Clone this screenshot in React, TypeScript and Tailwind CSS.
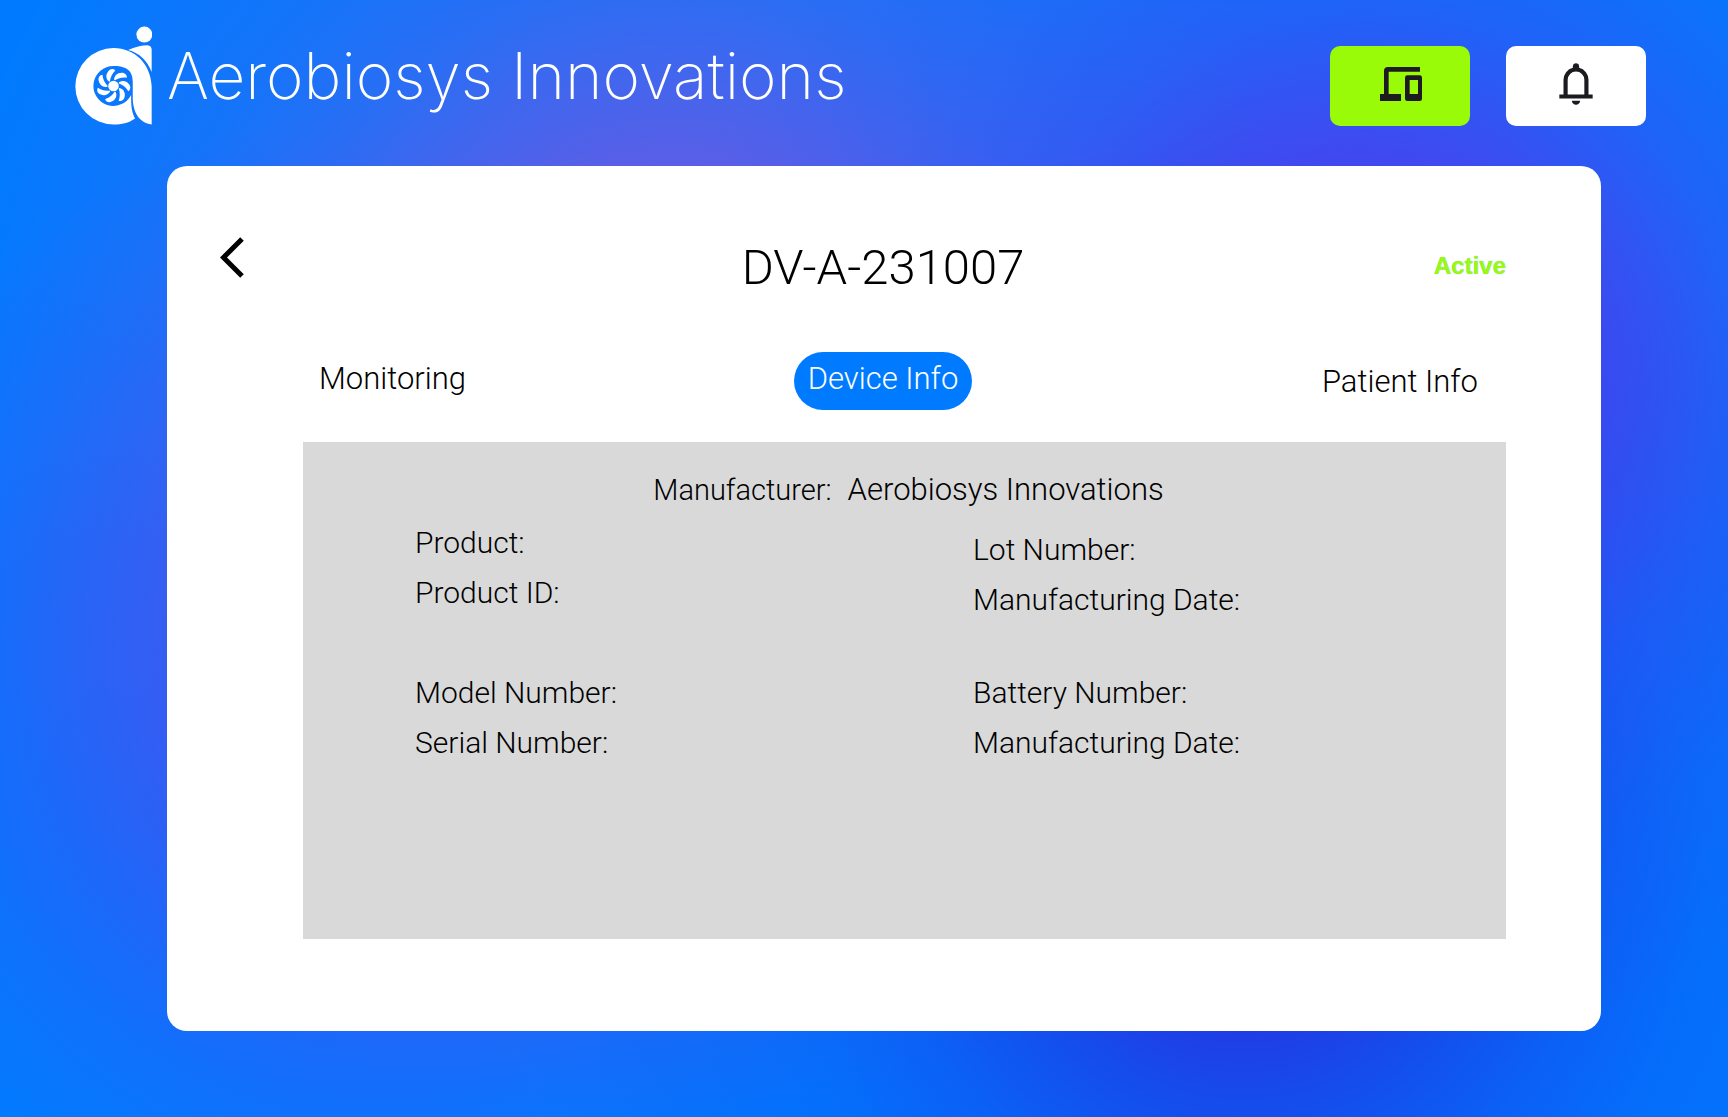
import { ReactNode } from "react";

const BLADES = [0, 1, 2, 3, 4, 5, 6].map((n) => (n * 360) / 7);

function Logo() {
  return (
    <svg viewBox="45 33 232 297" className="h-[99px] w-[77px] shrink-0 text-white" fill="currentColor" aria-hidden="true">
      <circle cx="254" cy="58" r="24" />
      <path d="M205 105C225 95 247 90 263 90Q276 91 276 104V171C263 138 240 114 205 105Z" />
      <path
        fillRule="evenodd"
        d="M161 99C226 99 273 148 276 214V329C240 326 218 292 219 245V200C219 160 190 153 161 153A60 60 0 1 0 214 240C214 275 216 292 226 311C206 325 186 329 161 329A115 115 0 0 1 161 99Z"
      />
      <circle cx="161" cy="213" r="16" />
      {BLADES.map((angle) => (
        <path
          key={angle}
          transform={`rotate(${angle} 161 213)`}
          d="M163 194C163 182 172 173 186 173C196 173 202 180 201 188C190 186 175 189 165 196Z"
        />
      ))}
    </svg>
  );
}

function DevicesIcon() {
  return (
    <svg viewBox="0 0 126 102" className="ml-0.5 h-[34px] w-[42px]" fill="currentColor" aria-hidden="true">
      <path d="M12 81V12Q12 0 24 0H120V14H26V81H63V102H0V81Z" />
      <path fillRule="evenodd" d="M82 25H119Q126 25 126 32V95Q126 102 119 102H82Q75 102 75 95V32Q75 25 82 25ZM89 39V81H114V39Z" />
    </svg>
  );
}

function BellIcon() {
  return (
    <svg viewBox="0 0 24 24" className="size-[50px]" fill="currentColor" aria-hidden="true">
      <path d="M4 19v-2h2v-7q0-2.080 1.250-3.690T10.500 4.200v-.7q0-.62.44-1.060T12 2t1.060.44.44 1.060v.7q2 .5 3.250 2.110T18 10v7h2v2H4Zm8 3q-.82 0-1.410-.59T10 20h4q0 .83-.59 1.410T12 22Zm-4-5h8v-7q0-1.650-1.170-2.820T12 6 9.180 7.180 8 10v7Z" />
    </svg>
  );
}

function IconButton({ label, className, children }: { label: string; className: string; children: ReactNode }) {
  return (
    <button
      type="button"
      aria-label={label}
      className={`flex h-20 w-[140px] items-center justify-center rounded-[10px] pb-1 text-[#1d1b20] ${className}`}
    >
      {children}
    </button>
  );
}

function Field({ label }: { label: string }) {
  return <dt className="h-[50px]">{label}</dt>;
}

const BACKDROP =
  "bg-[#007bff] bg-[radial-gradient(circle_at_72%_78%,rgba(34,56,228,1)_0,rgba(34,56,228,0.920)_160px,rgba(28,60,230,0.700)_250px,rgba(24,66,234,0.480)_350px,rgba(20,70,238,0.260)_460px,rgba(20,70,238,0)_740px),radial-gradient(circle_at_79%_34%,rgba(78,62,236,1)_0,rgba(78,62,236,0.850)_210px,rgba(78,62,236,0.700)_270px,rgba(78,62,236,0.400)_375px,rgba(78,62,236,0.130)_520px,rgba(78,62,236,0)_680px),radial-gradient(circle_at_39%_34%,rgba(116,86,224,1)_0,rgba(116,86,224,0.780)_214px,rgba(116,86,224,0.560)_310px,rgba(116,86,224,0.360)_400px,rgba(116,86,224,0.180)_520px,rgba(116,86,224,0)_740px),radial-gradient(circle_at_22%_62%,rgba(60,84,242,1)_0,rgba(60,84,242,0.750)_213px,rgba(60,84,242,0.520)_320px,rgba(60,84,242,0.280)_420px,rgba(60,84,242,0)_580px)]";

export default function App() {
  return (
    <div className={`min-h-screen font-[Roboto,sans-serif] font-light text-black ${BACKDROP}`}>
      <header className="flex items-start pt-[26px] pr-[82px] pl-[75px]">
        <Logo />
        <h1 className="ml-[15px] pt-2.5 font-[Inter,sans-serif] text-[64px] leading-[80px] font-extralight whitespace-nowrap text-white">
          Aerobiosys Innovations
        </h1>
        <div className="ml-auto flex gap-9 pt-5">
          <IconButton label="Devices" className="bg-[#99fb07]">
            <DevicesIcon />
          </IconButton>
          <IconButton label="Notifications" className="bg-white">
            <BellIcon />
          </IconButton>
        </div>
      </header>

      <main className="mt-10 mr-[127px] ml-[167px] rounded-[20px] bg-white pt-[71px] pr-[95px] pb-[92px] pl-[53px]">
        <div className="grid grid-cols-[1fr_auto_1fr] items-center">
          <button type="button" aria-label="Back" className="mb-5 w-6">
            <svg viewBox="0 0 24 41" className="h-[41px] w-6" fill="none" stroke="currentColor" strokeWidth="5" aria-hidden="true">
              <path d="M22 2 3.500 20.500 22 39" />
            </svg>
          </button>
          <h2 className="ml-10 text-[49px] leading-[60px]">DV-A-231007</h2>
          <p className="mb-1 justify-self-end font-['Liberation_Sans',Arial,sans-serif] text-2xl font-bold text-[#99fb07] [text-shadow:0_0_1px_#80b8e0]">
            Active
          </p>
        </div>

        <nav className="mt-[54px] ml-[68px] grid grid-cols-[1fr_auto_1fr] items-start pr-7 text-[31px] leading-[38px]">
          <button type="button" className="mt-2 ml-[31px] justify-self-start">Monitoring</button>
          <button type="button" aria-current="page" className="h-[58px] rounded-full bg-[#007bff] px-3.5 pb-1 text-white">
            Device Info
          </button>
          <button type="button" className="mt-[11px] justify-self-end">Patient Info</button>
        </nav>

        <section className="mt-8 ml-[83px] min-h-[497px] bg-[#d9d9d9] pt-[29px] text-[30px] leading-[38px]">
          <p className="flex items-baseline justify-center gap-4 pl-2">
            <span className="text-[29px]">Manufacturer:</span>
            <span className="text-[31px]">Aerobiosys Innovations</span>
          </p>
          <div className="mt-[15px] grid grid-cols-[558fr_533fr] pl-28">
            <dl className="grid content-start gap-y-[50px]">
              <div>
                <Field label="Product:" />
                <Field label="Product ID:" />
              </div>
              <div>
                <Field label="Model Number:" />
                <Field label="Serial Number:" />
              </div>
            </dl>
            <dl className="grid content-start gap-y-[43px] pt-[7px]">
              <div>
                <Field label="Lot Number:" />
                <Field label="Manufacturing Date:" />
              </div>
              <div>
                <Field label="Battery Number:" />
                <Field label="Manufacturing Date:" />
              </div>
            </dl>
          </div>
        </section>
      </main>
    </div>
  );
}
